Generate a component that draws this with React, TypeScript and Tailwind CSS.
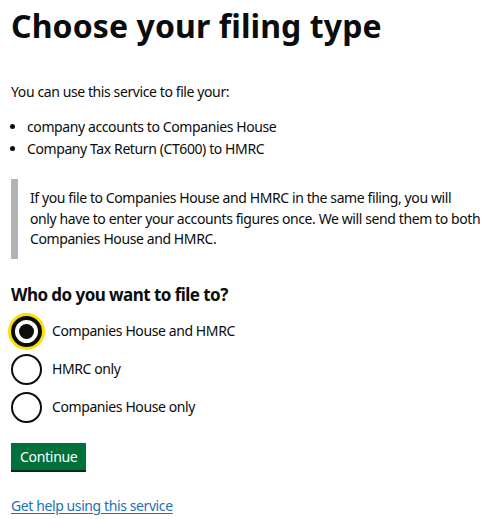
export default function App() {
  return (
    <main className="min-h-screen bg-white px-[11px] pt-[6px] font-['Noto_Sans',sans-serif] text-[#0b0c0c]">
      <h1 className="text-[32px] font-bold leading-[40px] tracking-[0.1px]">Choose your filing type</h1>

      <p className="mt-[36px] text-[14px] leading-[20px] tracking-[-0.4px]">You can use this service to file your:</p>

      <ul className="mt-[15px] list-disc space-y-[2px] pl-[16px] text-[14px] leading-[20px] tracking-[-0.4px]">
        <li>company accounts to Companies House</li>
        <li>Company Tax Return (CT600) to HMRC</li>
      </ul>

      <div className="mt-[20px] border-l-[7px] border-[#b1b4b6] py-[9px] pl-[12px] text-[14px] leading-[20.5px] tracking-[-0.4px]">
        If you file to Companies House and HMRC in the same filing, you will
        <br />
        only have to enter your accounts figures once. We will send them to both
        <br />
        Companies House and HMRC.
      </div>

      <fieldset className="mt-[24px]">
        <legend className="text-[17px] font-bold leading-[24px] tracking-[-0.55px]">Who do you want to file to?</legend>
        <div className="mt-[9px] flex flex-col gap-[7px]">
          <Radio label="Companies House and HMRC" checked />
          <Radio label="HMRC only" />
          <Radio label="Companies House only" />
        </div>
      </fieldset>

      <button className="mt-[20px] h-[27px] bg-[#00703c] px-[9px] text-[14px] leading-[27px] tracking-[-0.3px] text-white shadow-[0_2px_0_#002d18]">
        Continue
      </button>

      <div className="mt-[23px]">
        <a href="#" className="text-[14px] leading-[20px] tracking-[-0.4px] text-[#1d70b8] underline underline-offset-2">
          Get help using this service
        </a>
      </div>
    </main>
  );
}

function Radio({ label, checked = false }: { label: string; checked?: boolean }) {
  return (
    <label className="flex items-center gap-[10px]">
      <span
        className={
          checked
            ? "flex size-[31px] items-center justify-center rounded-full border-[4px] border-[#0b0c0c] shadow-[0_0_0_3px_#ffdd00]"
            : "flex size-[31px] items-center justify-center rounded-full border-2 border-[#0b0c0c]"
        }
      >
        {checked && <span className="size-[15px] rounded-full bg-[#0b0c0c]" />}
      </span>
      <span className="text-[14px] leading-[20px] tracking-[-0.4px]">{label}</span>
    </label>
  );
}
